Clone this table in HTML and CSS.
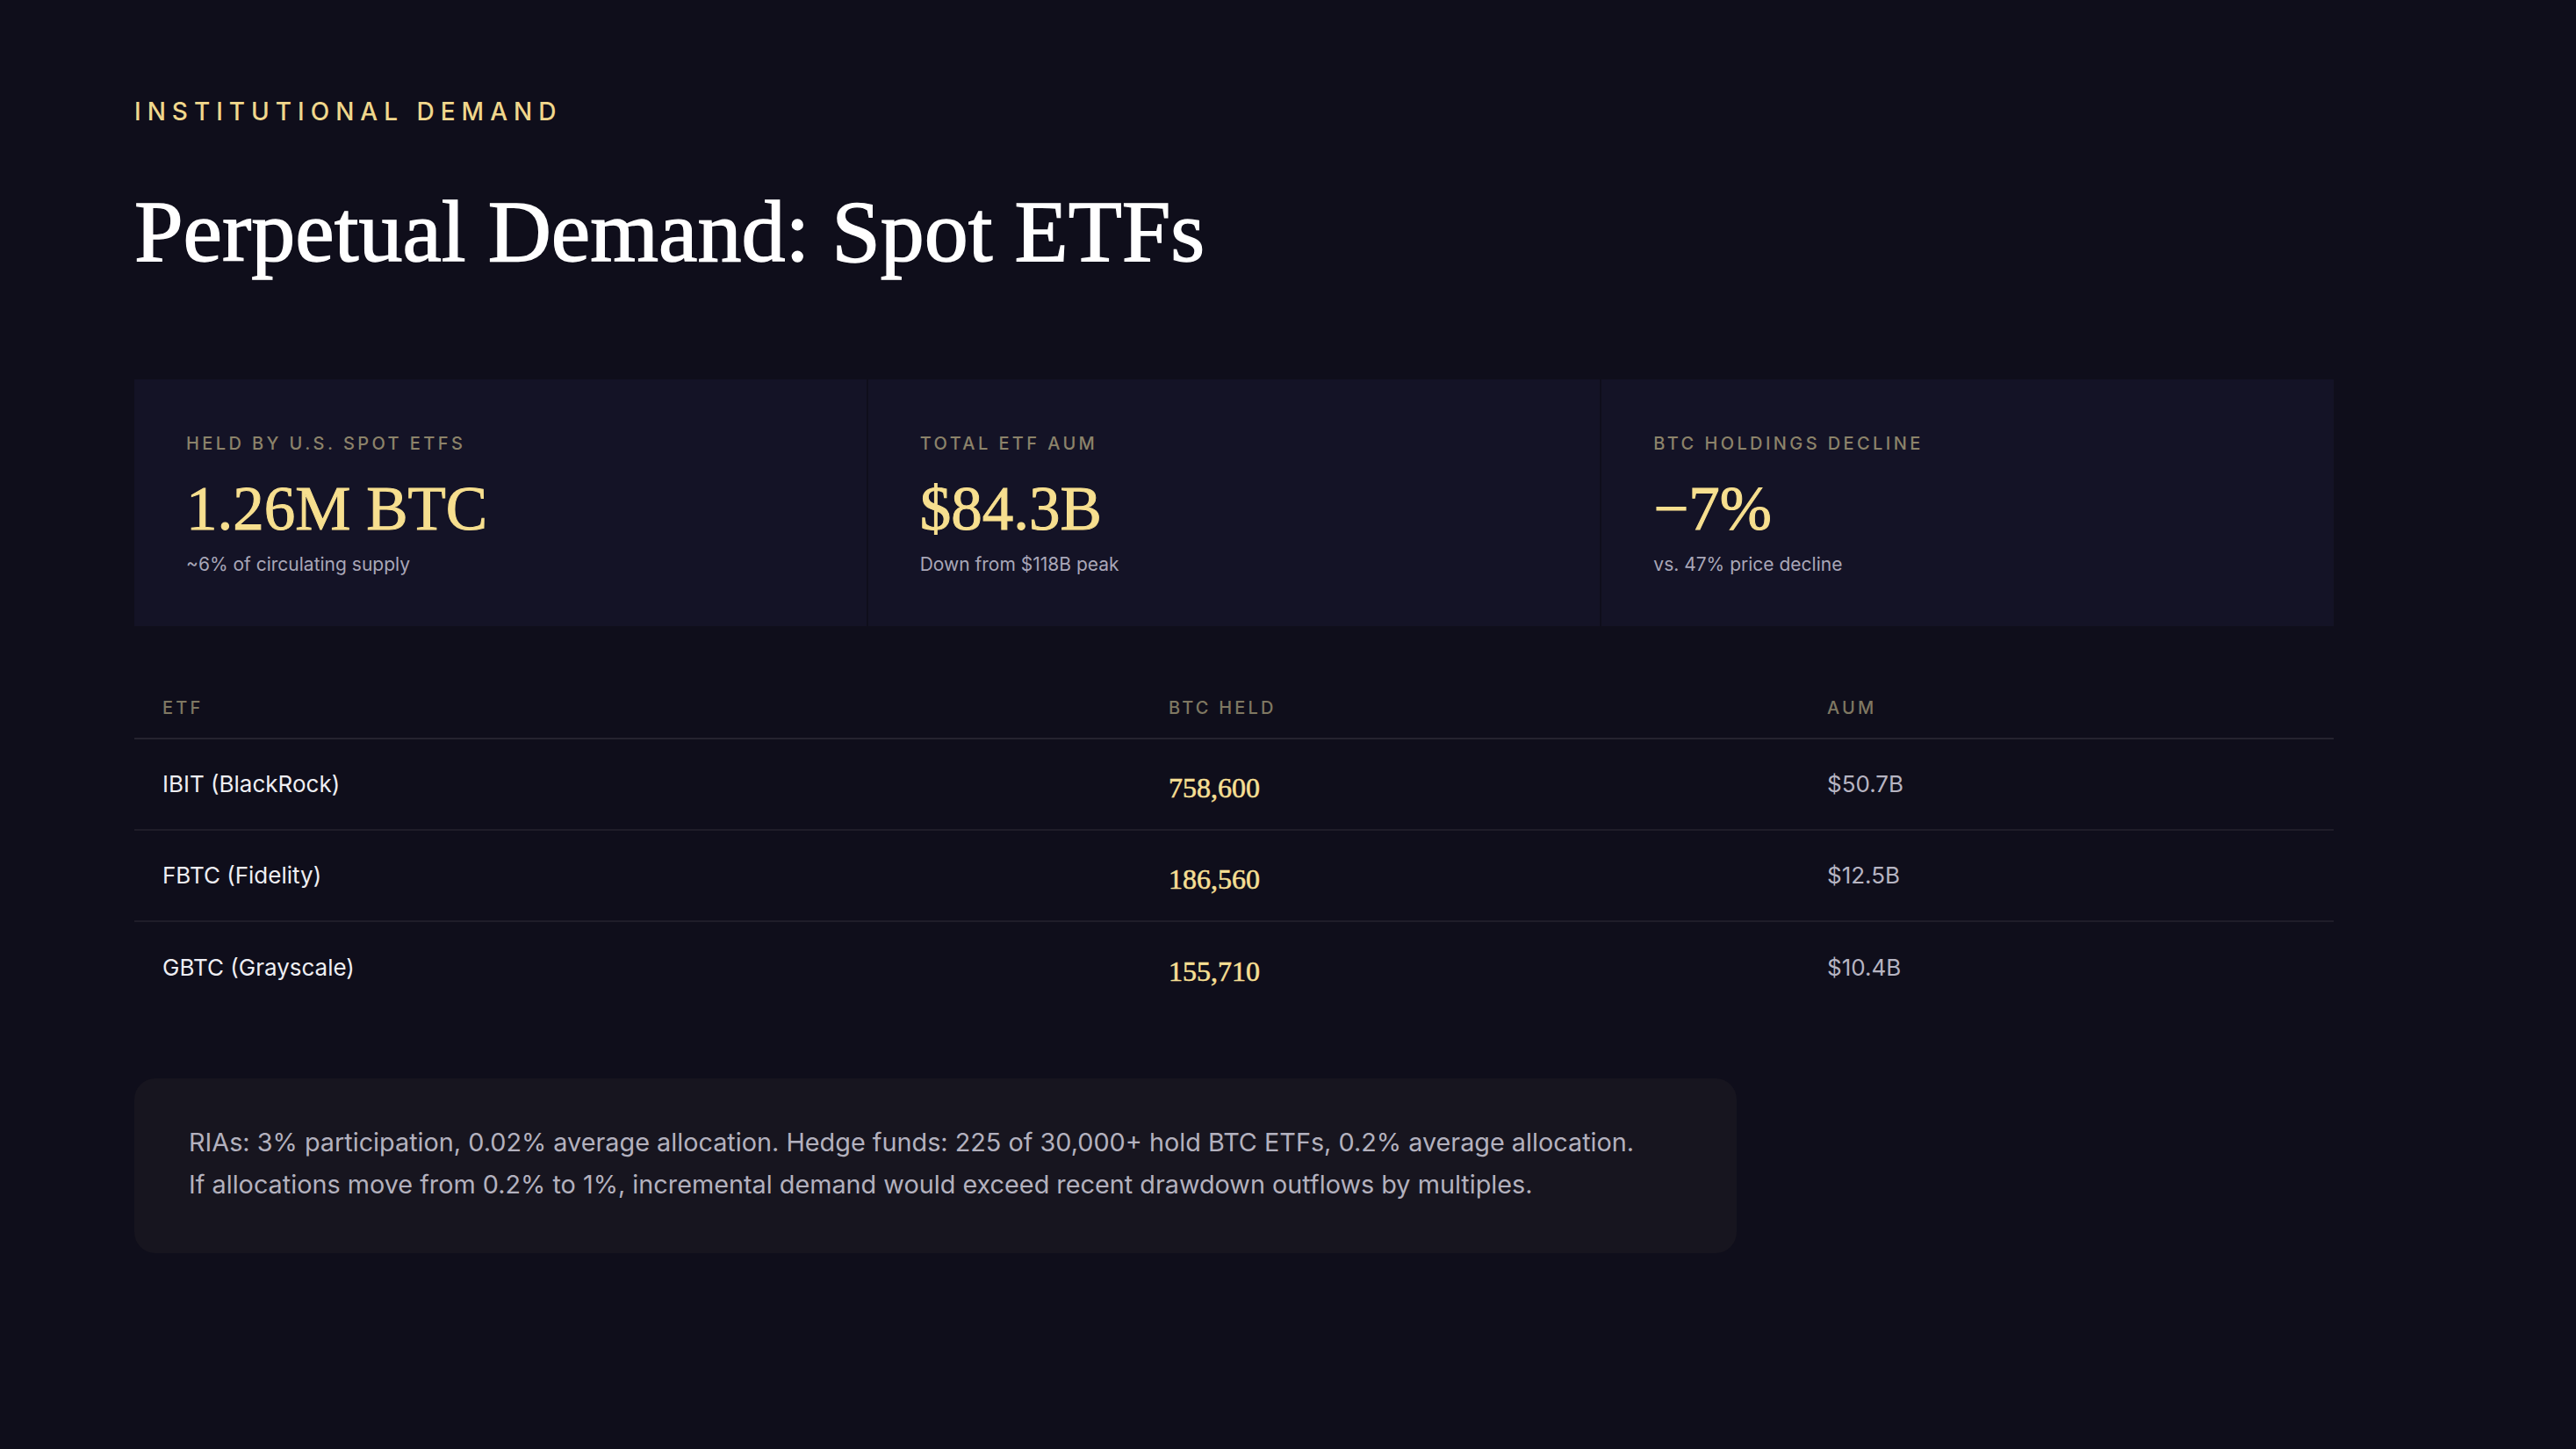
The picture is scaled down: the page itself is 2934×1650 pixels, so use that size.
FILE: index.html
```html
<!DOCTYPE html>
<html lang="en">
<head>
<meta charset="utf-8">
<title>Perpetual Demand: Spot ETFs</title>
<link rel="stylesheet" href="styles.css">
</head>
<body>
<main class="slide">
  <p class="eyebrow">Institutional Demand</p>
  <h1 class="title">Perpetual Demand: Spot ETFs</h1>

  <section class="stats">
    <div class="stat">
      <p class="stat-label">Held by U.S. Spot ETFs</p>
      <p class="stat-value">1.26M BTC</p>
      <p class="stat-sub">~6% of circulating supply</p>
    </div>
    <div class="stat">
      <p class="stat-label">Total ETF AUM</p>
      <p class="stat-value">$84.3B</p>
      <p class="stat-sub">Down from $118B peak</p>
    </div>
    <div class="stat">
      <p class="stat-label">BTC Holdings Decline</p>
      <p class="stat-value">&minus;7%</p>
      <p class="stat-sub">vs. 47% price decline</p>
    </div>
  </section>

  <table class="etf-table">
    <colgroup>
      <col class="col-name">
      <col class="col-btc">
      <col class="col-aum">
    </colgroup>
    <thead>
      <tr><th>ETF</th><th>BTC Held</th><th>AUM</th></tr>
    </thead>
    <tbody>
      <tr><td class="name">IBIT (BlackRock)</td><td class="num">758,600</td><td class="aum">$50.7B</td></tr>
      <tr><td class="name">FBTC (Fidelity)</td><td class="num">186,560</td><td class="aum">$12.5B</td></tr>
      <tr><td class="name">GBTC (Grayscale)</td><td class="num">155,710</td><td class="aum">$10.4B</td></tr>
    </tbody>
  </table>

  <div class="callout">
    <p>RIAs: 3% participation, 0.02% average allocation. Hedge funds: 225 of 30,000+ hold BTC ETFs, 0.2% average allocation.<br>If allocations move from 0.2% to 1%, incremental demand would exceed recent drawdown outflows by multiples.</p>
  </div>
</main>
</body>
</html>
```

FILE: styles.css
```css
* { box-sizing: border-box; }

html, body {
  margin: 0;
  padding: 0;
  background: #0f0e1b;
}

body {
  width: 2934px;
  height: 1650px;
  overflow: hidden;
  font-family: Inter, "Noto Sans", sans-serif;
}

.slide {
  padding: 113px 0 0 153px;
  width: 2658px;
}

.eyebrow {
  margin: 0;
  font-size: 28px;
  line-height: 1;
  letter-spacing: 0.25em;
  text-transform: uppercase;
  color: #f0d78c;
  font-weight: 500;
}

.title {
  margin: 73px 0 0;
  font-family: "Liberation Serif", "DejaVu Serif", serif;
  font-weight: 400;
  font-size: 100px;
  line-height: 1;
  color: #ffffff;
  -webkit-text-stroke: 1.4px #ffffff;
}

.stats {
  margin-top: 118px;
  display: grid;
  grid-template-columns: repeat(3, 1fr);
  gap: 2px;
  width: 2505px;
}

.stat {
  background: #141326;
  height: 281px;
  padding: 63px 59px 0;
}

.stat p { margin: 0; }

.stat-label {
  font-size: 20px;
  line-height: 1;
  letter-spacing: 0.17em;
  text-transform: uppercase;
  color: #8c836a;
  font-weight: 500;
}

.stat-value {
  margin-top: 29px !important;
  font-family: "Liberation Serif", "DejaVu Serif", serif;
  font-size: 71px;
  line-height: 1;
  color: #f7df8f;
  -webkit-text-stroke: 1px #f7df8f;
}

.stat-sub {
  margin-top: 17px !important;
  font-size: 21px;
  line-height: 1;
  color: #a9a7b8;
}

.etf-table {
  margin-top: 63px;
  width: 2505px;
  border-collapse: collapse;
  table-layout: fixed;
}

.col-name { width: 1146px; }
.col-btc { width: 750px; }
.col-aum { width: 609px; }

.etf-table th {
  text-align: left;
  font-size: 20px;
  line-height: 1;
  font-weight: 500;
  letter-spacing: 0.16em;
  text-transform: uppercase;
  color: #7f7862;
  padding: 20px 32px 24px;
  border-bottom: 2px solid #25232f;
}

.etf-table td {
  height: 104px;
  padding: 0 32px;
  vertical-align: middle;
  line-height: 1;
  border-bottom: 2px solid #1f1d29;
}

.etf-table tbody tr:last-child td { border-bottom: none; }

.name {
  font-size: 26px;
  color: #eeeef3;
}

.num {
  font-family: "Liberation Serif", "DejaVu Serif", serif;
  font-size: 32px;
  color: #f5df93;
  -webkit-text-stroke: 0.6px #f5df93;
  padding-top: 8px !important;
}

.aum {
  font-size: 26px;
  color: #b6b4c2;
}

.callout {
  margin-top: 75px;
  width: 1825px;
  background: #17151f;
  border-radius: 24px;
  padding: 49px 62px 54px;
}

.callout p {
  margin: 0;
  font-size: 28.8px;
  line-height: 48px;
  color: #b3b1be;
}
```
